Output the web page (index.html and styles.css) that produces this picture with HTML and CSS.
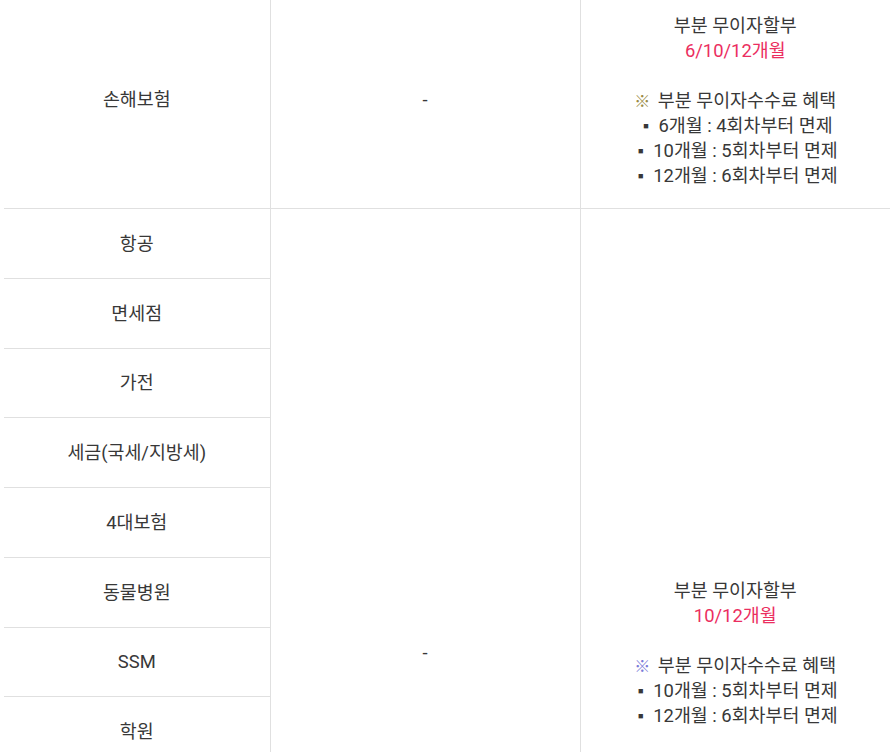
FILE: index.html
```html
<!DOCTYPE html>
<html lang="ko">
<head>
<meta charset="utf-8">
<title>무이자할부 안내</title>
<link rel="stylesheet" href="styles.css">
</head>
<body>
<table class="grid">
  <colgroup>
    <col class="c1"><col class="c2"><col class="c3">
  </colgroup>
  <tbody>
    <tr class="top">
      <td class="name">손해보험</td>
      <td class="mid">-</td>
      <td class="info">
        <div class="ln">부분 무이자할부</div>
        <div class="ln pink">6/10/12개월</div>
        <div class="ln"></div>
        <div class="ln"><span class="mark gold">※</span> 부분 무이자수수료 혜택</div>
        <div class="ln"><span class="sq">▪</span> 6개월 : 4회차부터 면제</div>
        <div class="ln"><span class="sq">▪</span> 10개월 : 5회차부터 면제</div>
        <div class="ln"><span class="sq">▪</span> 12개월 : 6회차부터 면제</div>
      </td>
    </tr>
    <tr class="row">
      <td class="name">항공</td>
      <td class="mid span" rowspan="12">-</td>
      <td class="info span" rowspan="12">
        <div class="ln">부분 무이자할부</div>
        <div class="ln pink">10/12개월</div>
        <div class="ln"></div>
        <div class="ln"><span class="mark blue">※</span> 부분 무이자수수료 혜택</div>
        <div class="ln"><span class="sq">▪</span> 10개월 : 5회차부터 면제</div>
        <div class="ln"><span class="sq">▪</span> 12개월 : 6회차부터 면제</div>
      </td>
    </tr>
    <tr class="row"><td class="name">면세점</td></tr>
    <tr class="row"><td class="name">가전</td></tr>
    <tr class="row"><td class="name">세금(국세/지방세)</td></tr>
    <tr class="row"><td class="name">4대보험</td></tr>
    <tr class="row"><td class="name">동물병원</td></tr>
    <tr class="row"><td class="name">SSM</td></tr>
    <tr class="row"><td class="name">학원</td></tr>
    <tr class="row"><td class="name">병원</td></tr>
    <tr class="row"><td class="name">주유소</td></tr>
    <tr class="row"><td class="name">여행사</td></tr>
    <tr class="row"><td class="name">기타</td></tr>
  </tbody>
</table>
</body>
</html>
```
FILE: styles.css
```css
html, body {
  margin: 0;
  padding: 0;
  background: #fff;
  overflow: hidden;
}
body {
  font-family: Roboto, "Noto Sans CJK KR", sans-serif;
  font-size: 18.4px;
  color: #383838;
}
.grid {
  border-collapse: collapse;
  table-layout: fixed;
  width: 886px;
  margin: -9px 0 0 4px;
}
.c1 { width: 266px; }
.c2 { width: 310px; }
.c3 { width: 310px; }
.grid td {
  border-bottom: 1px solid #e0e0e0;
  text-align: center;
  vertical-align: middle;
  line-height: 25px;
  padding: 0;
}
.grid td.mid, .grid td.info {
  border-left: 1px solid #e0e0e0;
}
.top td {
  padding: 21px 0;
  height: 175px;
}
.top td.info {
  padding: 22px 0 20px;
}
.ln {
  height: 25px;
  line-height: 25px;
  white-space: nowrap;
}
.row td.name {
  height: 68.75px;
}
.grid td.span {
  padding-top: 51px;
}
.pink { color: #eb2e5f; }
.mark { font-size: 16px; line-height: 0; margin-right: 3px; }
.gold { color: #9a8a45; }
.blue { color: #7b7bd8; }
.sq { font-size: 16px; line-height: 0; }
```
